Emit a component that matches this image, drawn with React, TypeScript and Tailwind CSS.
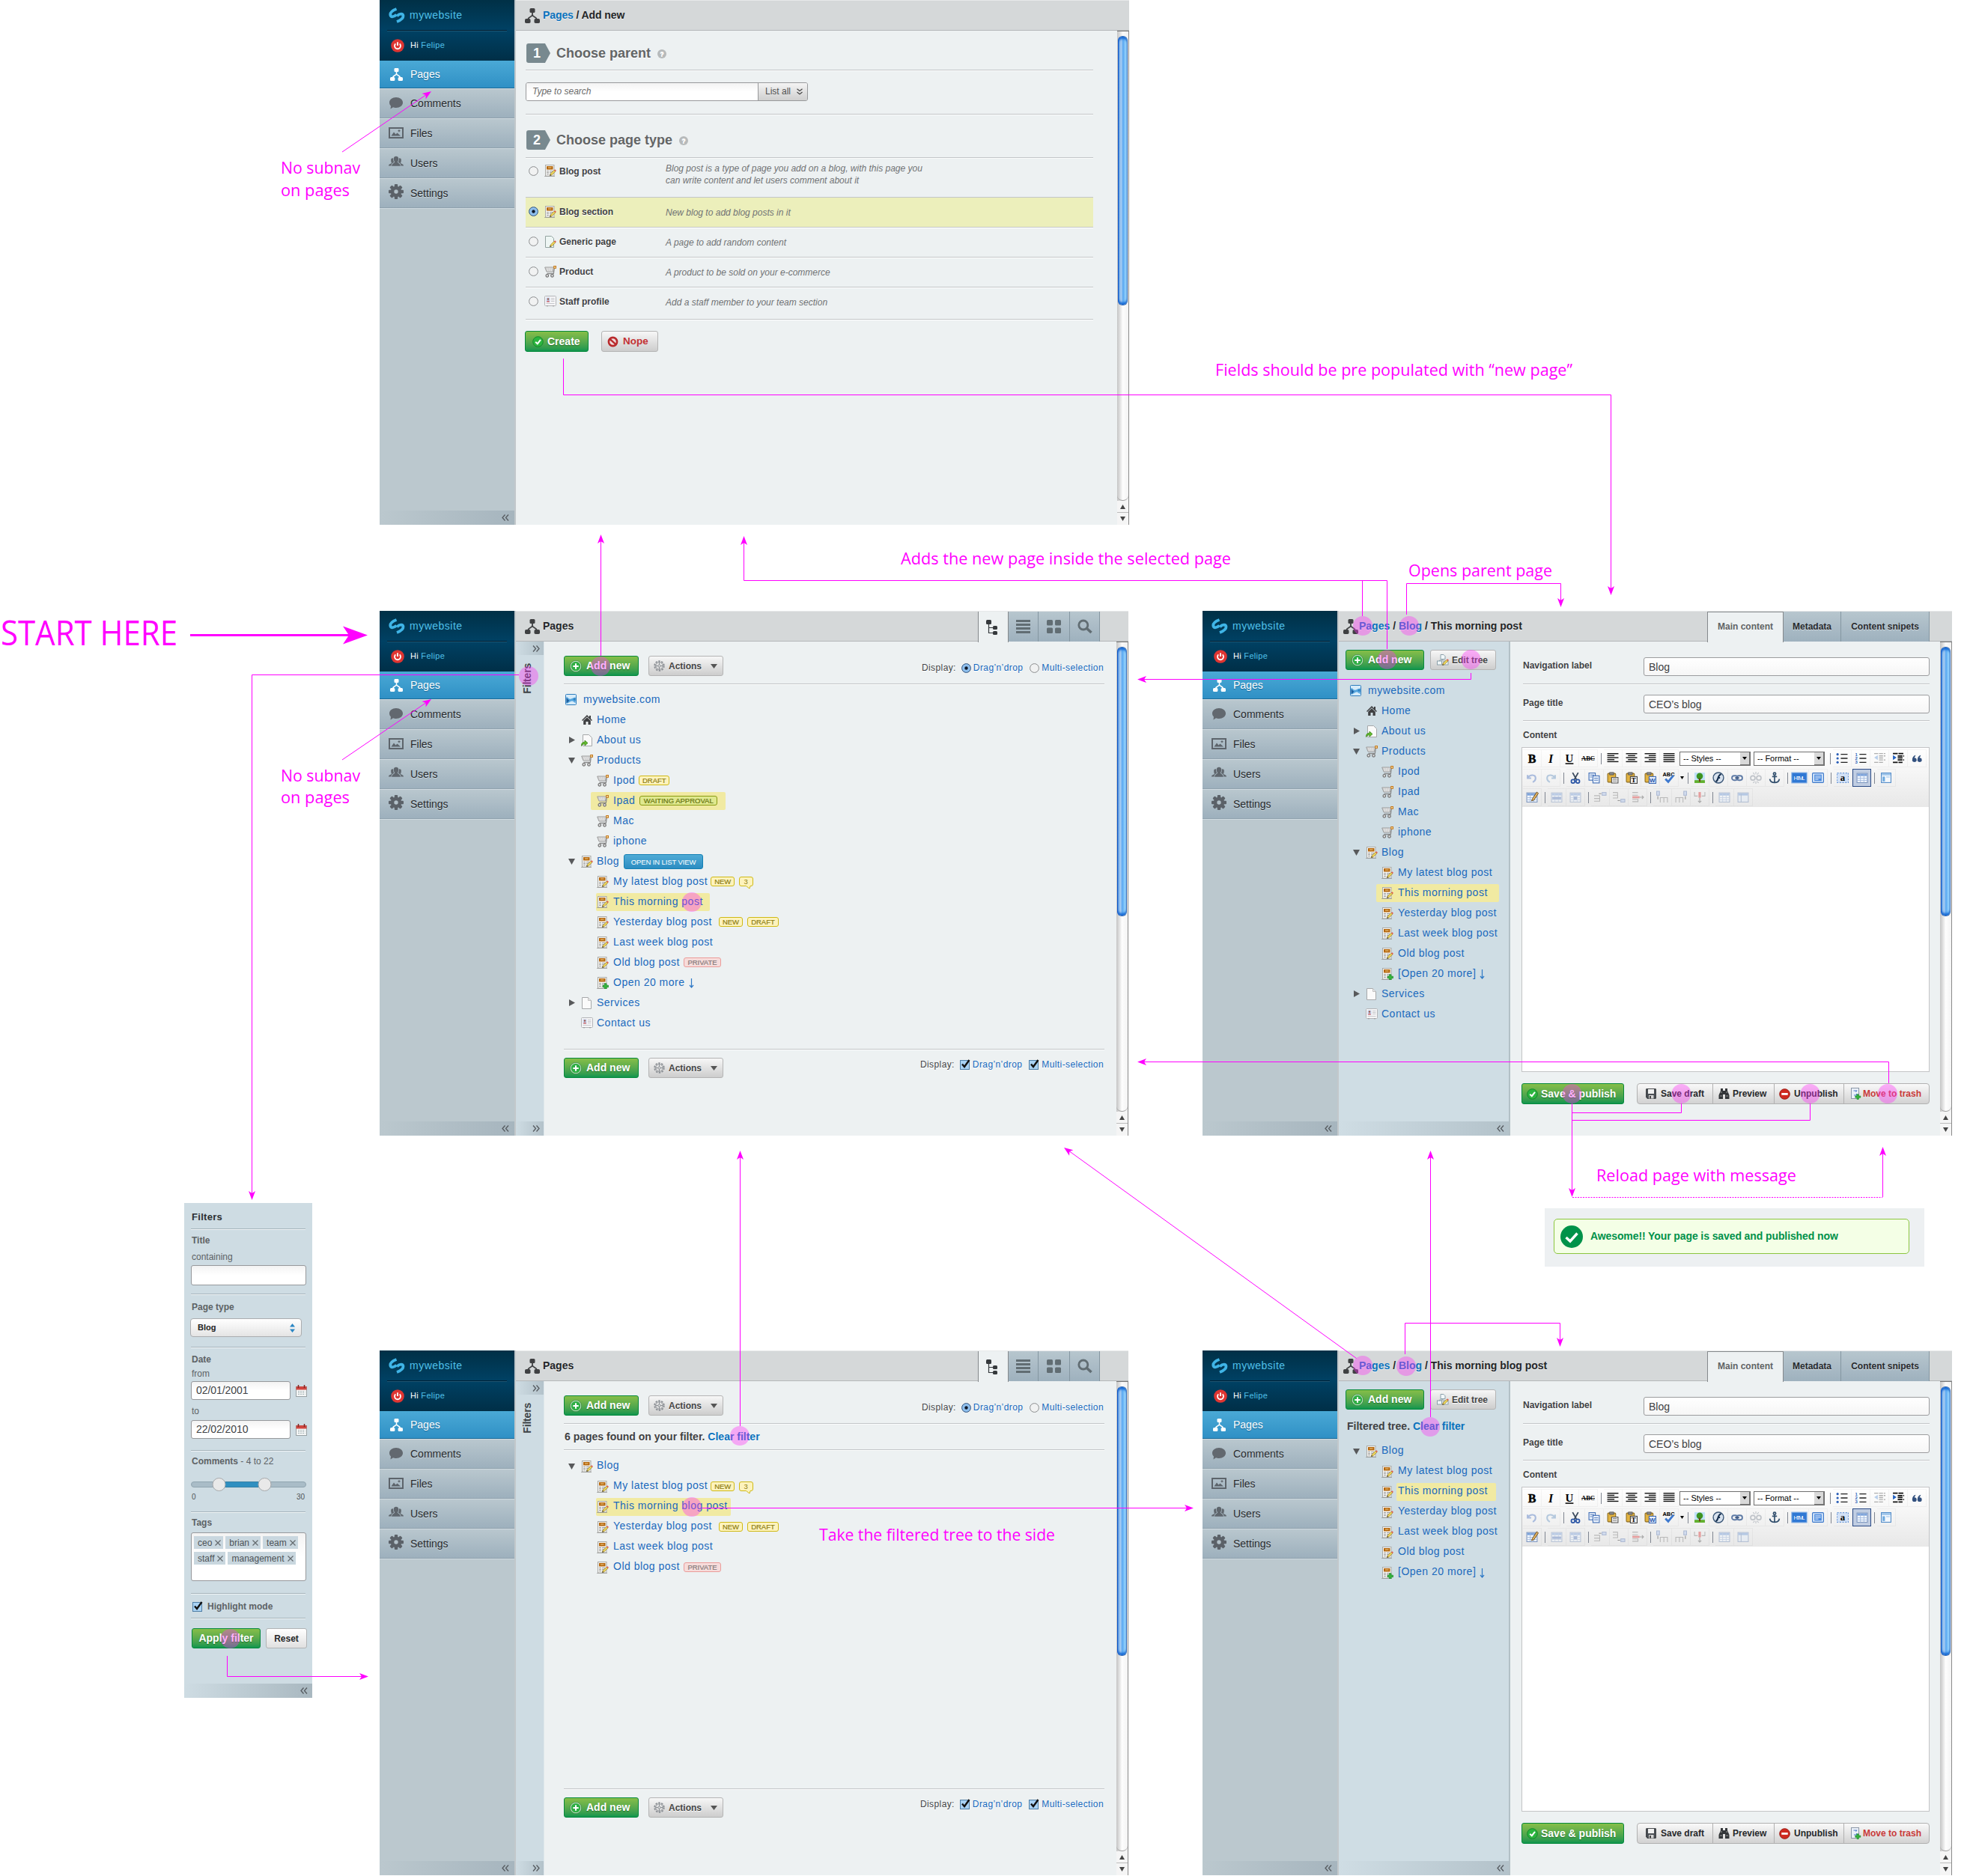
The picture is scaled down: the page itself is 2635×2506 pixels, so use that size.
import React from 'react';

type Kids = { children?: React.ReactNode; className?: string };

const green =
  'border border-[#078a3c] bg-gradient-to-b from-[#86be48] to-[#0a964e] rounded-[3px] text-white font-bold text-[14px] [text-shadow:0_1px_1px_rgba(0,60,0,.5)] shrink-0 flex items-center whitespace-nowrap';
const gray =
  'border border-[#b4b4b4] bg-gradient-to-b from-[#f7f7f7] to-[#cdcdcd] rounded-[3px] text-[#444] font-bold text-[12px] [text-shadow:0_1px_0_#fff] shrink-0 flex items-center whitespace-nowrap';
const rule = 'h-[2px] border-t border-[#c3c6c8] bg-white/80 shrink-0';

/* ---------- small pictograms ---------- */

const Logo = () => (
  <svg width="22" height="21" viewBox="0 0 22 21" fill="none" stroke="#3fb4e6" strokeWidth="3.8">
    <path d="M10.500 2C5 4 2 6.500 2.300 9.800C2.700 13.200 6.500 13 10.500 9.800" />
    <path d="M11 19C16.500 17 19.700 14.500 19.500 11.200C19 7.600 15 8 11.200 11.200" />
  </svg>
);

const SiteMap = ({ c = '#3f4042', w = 20 }: { c?: string; w?: number }) => (
  <svg width={w} height={w} viewBox="0 0 20 20" fill={c}>
    <rect x="6.500" y="0" width="7" height="6" rx="1.500" />
    <rect x="0" y="14" width="7.500" height="6" rx="1.800" />
    <rect x="12.500" y="14" width="7.500" height="6" rx="1.800" />
    <path d="M10 5V9.500M10 9C9 12 5 11 4 15M10 9C11 12 15 11 16 15" fill="none" stroke={c} strokeWidth="1.800" />
  </svg>
);

const Power = () => (
  <svg width="18" height="18" viewBox="0 0 18 18" fill="none">
    <circle cx="9" cy="9" r="8.800" fill="#df3532" />
    <path d="M6.300 6.300A4 4 0 1 0 11.700 6.300M9 4.200V9" stroke="#fff" strokeWidth="1.800" />
  </svg>
);

const Bubble = () => (
  <svg width="18" height="16" viewBox="0 0 18 16" fill="#62686f">
    <path d="M9 0C14 0 18 3 18 7S14 14 9 14C7.500 14 6 13.700 5 13.200L1.500 15.500L2 11.500C.7 10.300 0 8.800 0 7C0 3 4 0 9 0Z" />
  </svg>
);
const Picture = () => (
  <svg width="20" height="15" viewBox="0 0 20 15">
    <rect x="1" y="1" width="18" height="13" fill="none" stroke="#5d646b" strokeWidth="2" />
    <path d="M3.500 11.500L7 6.500L9.500 9.500L11.500 7.500L16 11.500Z" fill="#5d646b" />
    <path d="M14 3.200V6.200M12.500 4.700H15.500" stroke="#5d646b" strokeWidth="1.200" />
  </svg>
);
const People = () => (
  <svg width="22" height="15" viewBox="0 0 22 15" fill="#5f666d">
    <path d="M7.500 3.500C7.500 1 9 0 11 0S14.500 1 14.500 3.500C14.500 6 14 7.500 13 8.500C14 10.500 17 10.500 17.500 14.500H4.500C5 10.500 8 10.500 9 8.500C8 7.500 7.500 6 7.500 3.500Z" />
    <path d="M3.500 5.500C3.500 3.500 4.500 2.700 6.800 2.800C6.800 5.500 7 7.500 8 9C5.500 10 4 11.500 3.800 14H0C.2 11.500 3 11.500 4.500 10C3.800 8.800 3.500 7.500 3.500 5.500Z" />
    <path d="M18.500 5.500C18.500 3.500 17.500 2.700 15.200 2.800C15.200 5.500 15 7.500 14 9C16.500 10 18 11.500 18.200 14H22C21.800 11.500 19 11.500 17.500 10C18.200 8.800 18.500 7.500 18.500 5.500Z" />
  </svg>
);
const Cog = ({ c = '#5b6168', s = 20 }: { c?: string; s?: number }) => (
  <svg width={s} height={s} viewBox="0 0 20 20">
    <g fill={c}>
      {[0, 45, 90, 135].map((a) => (
        <rect key={a} x="7.800" y="0" width="4.400" height="20" rx="1" transform={`rotate(${a} 10 10)`} />
      ))}
    </g>
    <circle cx="10" cy="10" r="5" fill="none" stroke={c} strokeWidth="4.500" />
    <circle cx="10" cy="10" r="2.700" fill="#b2c0c8" />
  </svg>
);
const ActionGear = () => (
  <svg width="15" height="15" viewBox="0 0 15 15" fill="none" stroke="#8b8f94">
    <circle cx="7.500" cy="7.500" r="6.300" strokeWidth="1.800" strokeDasharray="2.500 1.450" />
    <circle cx="7.500" cy="7.500" r="4.800" />
    <circle cx="7.500" cy="7.500" r="1.600" />
    <path d="M7.500 2.500V6M7.500 9V12.500M2.500 7.500H6M9 7.500H12.500" />
  </svg>
);

const Pencil = () => (
  <g>
    <path d="M7.500 14.500L8.300 12L13 7.300L14.800 9L10 13.800Z" fill="#f1d95a" stroke="#8d742a" strokeWidth=".7" />
    <path d="M13 7.300L14.200 6.200L16 7.900L14.800 9Z" fill="#e0544a" />
    <path d="M7.300 14.800L7.900 13L9.200 14.200Z" fill="#333" />
  </g>
);
const PostBase = () => (
  <g>
    <rect x="1.500" y=".5" width="11.500" height="14.500" fill="#f7f7f5" stroke="#a9a9a5" />
    <rect x="3" y="2" width="8.500" height="4.500" fill="#b5680f" />
    <path d="M5 4H9.500" stroke="#f3cf8d" strokeWidth="1" />
    <path d="M3 8.500H6M7 8.500H11.500M3 10.500H6M7 10.500H10M3 12.500H6M7 12.500H9" stroke="#999" strokeWidth="1" />
    <path d="M0 15.500H14" stroke="#8a8a88" strokeOpacity=".6" />
  </g>
);
const Post = () => (
  <svg width="16" height="16" viewBox="0 0 16 16">
    <PostBase />
    <Pencil />
  </svg>
);
const Plus = () => (
  <path d="M10.500 8.800H13V11.200H15.500V13.700H13V16H10.500V13.700H8.200V11.200H10.500Z" fill="#35b53c" stroke="#1a8a28" strokeWidth=".7" />
);
const PostAdd = () => (
  <svg width="16" height="16" viewBox="0 0 16 16">
    <PostBase />
    <Plus />
  </svg>
);
const Cart = () => (
  <svg width="16" height="16" viewBox="0 0 16 16" fill="none">
    <path d="M.7 2H12.500L11.500 8H3Z" fill="#e4e4e4" stroke="#9a9a9a" />
    <path d="M2 4H12M2.500 6H11.500" stroke="#b4b4b4" strokeWidth=".8" strokeDasharray="1.500 1" />
    <path d="M13.500 2L12.300 10.500H3.500" stroke="#8a8a8a" strokeWidth="1.300" />
    <rect x="12.700" y=".5" width="2.800" height="2.800" fill="#f3d9a0" stroke="#c4781c" />
    <circle cx="3.800" cy="13.300" r="1.800" fill="#e0e0e0" stroke="#6f6f6f" strokeWidth="1.200" />
    <circle cx="10.500" cy="13.300" r="1.800" fill="#e0e0e0" stroke="#6f6f6f" strokeWidth="1.200" />
  </svg>
);
const Sheet = () => <path d="M1.500 .5H9.500L13.500 4.500V15.500H1.500Z" fill="#fafafa" stroke="#a6a8aa" />;
const Page = () => (
  <svg width="16" height="16" viewBox="0 0 16 16">
    <Sheet />
    <path d="M9.500 .5V4.500H13.500" fill="#e7e7e7" stroke="#b5b5b5" strokeWidth=".8" />
  </svg>
);
const PageEdit = () => (
  <svg width="16" height="16" viewBox="0 0 16 16">
    <path d="M1.500 .5H9.500L12.500 3.500V15.500H1.500Z" fill="#eef6f4" stroke="#93a3a0" />
    <Pencil />
  </svg>
);
const PageLink = () => (
  <svg width="16" height="16" viewBox="0 0 16 16">
    <path d="M2.500 .5H10.500L14.500 4.500V15.500H2.500Z" fill="#fafafa" stroke="#a6a8aa" />
    <path d="M.5 15.500C.5 11.500 2 10.300 5 10.300V8L9 11.600L5 15V12.800C3 12.800 1.500 13.500 .5 15.500Z" fill="#63bb2e" stroke="#398317" strokeWidth=".8" />
  </svg>
);
const Profile = () => (
  <svg width="16" height="15" viewBox="0 0 16 15">
    <rect x=".5" y=".5" width="15" height="13" rx="1" fill="#f6f6f7" stroke="#b3b4b8" />
    <rect x="2.500" y="2.500" width="5" height="6" fill="#c3d2ee" />
    <circle cx="5" cy="4.500" r="1.200" fill="#9c5a4a" />
    <path d="M3 8.500C3 6.300 7 6.300 7 8.500Z" fill="#cf6464" />
    <path d="M9 3.500H13.500M9 5.500H13.500M9 7.500H13.500M2.500 10.500H13.500" stroke="#c6c7cc" />
    <path d="M3 13.800H5M11 13.800H13" stroke="#999" />
  </svg>
);
const House = () => (
  <svg width="14" height="13" viewBox="0 0 14 13" fill="#3e3f41">
    <path d="M7 0L14 7L13 8L7 2.300L1 8L0 7Z" />
    <path d="M2.200 7.800L7 3.300L11.800 7.800V13H8.500V9H5.500V13H2.200Z" />
    <rect x="10" y="1" width="2" height="4" />
  </svg>
);
const World = () => (
  <svg width="15" height="15" viewBox="0 0 15 15">
    <rect x=".5" y=".5" width="14" height="14" rx="1" fill="#d6ebf9" stroke="#2f7dbd" />
    <path d="M1.500 4C3 4 4 6 5.500 6.500C8 7.500 9.500 5 13.500 4.500V12C12 12 11 9.500 9.500 9.500C7.500 9 6 11 1.500 13Z" fill="#57a6de" />
    <path d="M1.500 5C3 6 3.500 8 5.500 8.500C4.500 10 3 11.500 1.500 12Z" fill="#1c5f9f" />
    <path d="M10 7L13.500 5V9.500Z" fill="#2b7fc2" />
  </svg>
);
const AddIcon = () => (
  <svg width="16" height="16" viewBox="0 0 16 16" fill="none">
    <circle cx="8" cy="8" r="6.900" fill="#2fae45" stroke="#cfe8cf" strokeWidth="1.200" />
    <circle cx="8" cy="8" r="7.600" stroke="#2a7a3a" strokeWidth=".6" />
    <path d="M8 4.300V11.700M4.300 8H11.700" stroke="#fff" strokeWidth="2" />
  </svg>
);
const CheckIcon = () => (
  <svg width="15" height="15" viewBox="0 0 15 15" fill="none">
    <circle cx="7.500" cy="7.500" r="6.800" fill="#2bb53f" stroke="#138a2b" />
    <path d="M4.200 7.800L6.800 10.200L11 4.800" stroke="#fff" strokeWidth="2" />
  </svg>
);
const Nope = () => (
  <svg width="15" height="15" viewBox="0 0 15 15" fill="none">
    <circle cx="7.500" cy="7.500" r="5.600" fill="#eedada" stroke="#b92a2c" strokeWidth="2.600" />
    <path d="M3.500 3.800L11.500 11.200" stroke="#b92a2c" strokeWidth="2.400" />
  </svg>
);
const Help = () => (
  <div className="w-[12px] h-[12px] rounded-full bg-[#b7babb] text-white text-[9px] font-bold leading-[12px] text-center">?</div>
);
const Radio = ({ on }: { on?: boolean }) => (
  <svg width="13" height="13" viewBox="0 0 13 13">
    <circle cx="6.500" cy="6.500" r="5.900" fill={on ? '#8fc0ee' : '#f1f2f2'} stroke={on ? '#31527c' : '#8a8c8e'} />
    {on && <circle cx="6.500" cy="6.500" r="2.200" fill="#10192a" />}
  </svg>
);
const Check = () => (
  <svg width="14" height="14" viewBox="0 0 14 14" fill="none">
    <rect x=".5" y="1.500" width="12" height="12" fill="#a9d2f3" stroke="#4f7ea6" />
    <path d="M3 6.500L6 10L12.500 1" stroke="#111" strokeWidth="2.400" />
  </svg>
);
const Tri = ({ open, s = 9 }: { open?: boolean; s?: number }) => (
  <svg width={s} height={s} viewBox="0 0 9 9" fill="#58595b">
    {open ? <path d="M0 1H9L4.500 9Z" /> : <path d="M1 0L9 4.500L1 9Z" />}
  </svg>
);
const Chev = ({ right }: { right?: boolean }) => (
  <svg width="10" height="9" viewBox="0 0 10 9" fill="none" stroke="#565b60" strokeWidth="1.300">
    {right ? <path d="M1 .5L4.500 4.500L1 8.500M5.500 .5L9 4.500L5.500 8.500" /> : <path d="M4.500 .5L1 4.500L4.500 8.500M9 .5L5.500 4.500L9 8.500" />}
  </svg>
);

/* ---------- window chrome ---------- */

const navItems = [
  { label: 'Comments', icon: <Bubble />, pad: '' },
  { label: 'Files', icon: <Picture />, pad: 'pb-[2px]' },
  { label: 'Users', icon: <People />, pad: 'pb-[5px]' },
  { label: 'Settings', icon: <Cog />, pad: 'pb-[5px]' },
];

const Sidebar = () => (
  <div className="w-[180px] shrink-0 flex flex-col bg-[#bbc8ce]">
    <div className="h-[81px] shrink-0 flex flex-col bg-gradient-to-b from-[#003046] via-[#004164] to-[#002f47]">
      <div className="h-[40px] flex items-center pl-[12px] gap-[6px] text-[14px] tracking-[0.5px] text-[#4fc0ea]">
        <Logo />
        mywebsite
      </div>
      <div className="mx-[10px] h-[2px] bg-[#001f33] border-b border-[#1d5775]" />
      <div className="h-[37px] flex items-center pl-[15px] gap-[8px] text-[11px] tracking-[0.3px] text-white">
        <Power />
        <span>
          Hi <span className="text-[#4fc0ea]">Felipe</span>
        </span>
      </div>
    </div>
    <div className="h-[37px] shrink-0 flex items-center pl-[12px] gap-[9px] text-[14px] text-white bg-gradient-to-b from-[#4aa9d6] to-[#2f90c5] border-b border-[#1b6c9a] [text-shadow:0_1px_1px_rgba(0,60,100,.5)]">
      <span className="w-[20px] flex justify-center">
        <SiteMap c="#fff" w={17} />
      </span>
      Pages
    </div>
    {navItems.map((n) => (
      <div
        key={n.label}
        className="h-[40px] shrink-0 flex items-center pl-[12px] gap-[9px] text-[14px] text-[#26292c] bg-gradient-to-b from-[#b9c7ce] to-[#9db0bd] border-t border-t-[#cfdae0] border-b border-b-[#8fa1ad] [text-shadow:0_1px_0_rgba(255,255,255,.4)]"
      >
        <span className={`w-[20px] flex justify-center ${n.pad}`}>{n.icon}</span>
        {n.label}
      </div>
    ))}
    <div className="flex-1 border-t border-[#cfdae0]" />
    <div className="h-[19px] flex items-center justify-end pr-[7px] bg-gradient-to-r from-[#bbc8ce] to-[#a6b5be]">
      <Chev />
    </div>
  </div>
);

const Scrollbar = () => (
  <div className="w-[16px] shrink-0 flex flex-col border-t border-[#777] border-r border-r-[#8b8b8b] bg-gradient-to-r from-[#c4c4c4] via-[#fafafa] to-[#f0f0f0]">
    <div className="mt-[6px] ml-px w-[13px] h-[360px] rounded-[6px] border border-[#3a6fb8] border-l-[#0c55c8] bg-[linear-gradient(90deg,#6ba6e6_0%,#a9cdf2_30%,#58a8f2_55%,#8cccfa_80%,#a9e2ff_100%)] shadow-[inset_0_4px_3px_-1px_#1669d4,inset_0_-4px_3px_-1px_#1669d4]" />
    <div className="flex-1 rounded-b-[7px] border-b border-[#a0a0a0] bg-gradient-to-r from-[#c4c4c4] via-[#fdfdfd] to-[#f3f3f3]" />
    <div className="h-[16px] flex items-center justify-center bg-[#f5f5f5] border-b border-[#bbb]">
      <svg width="7" height="6">
        <path d="M0 6L3.500 0L7 6Z" fill="#444" />
      </svg>
    </div>
    <div className="h-[16px] flex items-center justify-center bg-[#f5f5f5]">
      <svg width="7" height="6">
        <path d="M0 0L3.500 6L7 0Z" fill="#444" />
      </svg>
    </div>
  </div>
);

const Win = ({
  pos,
  title,
  tabs,
  children,
  head = 'pl-[12px] gap-[4px]',
}: {
  pos: string;
  title: React.ReactNode;
  tabs?: React.ReactNode;
  children: React.ReactNode;
  head?: string;
}) => (
  <section className={`absolute w-[1000px] h-[701px] flex bg-[#edf1f2] ${pos}`}>
    <Sidebar />
    <div className="flex-1 flex flex-col border-l-2 border-[#c2c8cb]">
      <div className="h-[41px] shrink-0 flex border-t border-t-[#e6e8e9] bg-[#d5d8d9] shadow-[inset_0_-1px_0_#b5b8ba]">
        <div className={`flex items-center h-[39px] font-bold text-[14px] text-[#232527] whitespace-nowrap [text-shadow:0_1px_0_rgba(255,255,255,.6)] ${head}`}>
          <SiteMap />
          <span>{title}</span>
        </div>
        <div className="flex-1" />
        {tabs}
      </div>
      <div className="flex-1 flex min-h-0">
        {children}
        <Scrollbar />
      </div>
    </div>
  </section>
);

const L = ({ children }: Kids) => <span className="text-[#0a72bd]">{children}</span>;

/* ---------- "Add new" window ---------- */

const Step = ({ n, children }: { n: string; children: React.ReactNode }) => (
  <div className="flex items-center h-[26px] ml-px text-[18px] font-bold text-[#636566] [text-shadow:0_1px_0_#fff]">
    <div className="w-[32px] h-[26px] mr-[8px] pl-[9px] bg-[#78898f] text-white leading-[26px] rounded-l-[3px] [clip-path:polygon(0_0,78%_0,100%_50%,78%_100%,0_100%)] [text-shadow:none]">
      {n}
    </div>
    {children}
    <div className="ml-[9px] mt-[2px]">
      <Help />
    </div>
  </div>
);

const types = [
  { n: 'Blog post', d: 'Blog post is a type of page you add on a blog, with this page you can write content and let users comment about it', i: <Post />, h: 'h-[53px] items-start pt-[9px]', on: false },
  { n: 'Blog section', d: 'New blog to add blog posts in it', i: <Post />, h: 'h-[40px] items-center bg-[#ecefbb] pb-[2px]', on: true },
  { n: 'Generic page', d: 'A page to add random content', i: <PageEdit />, h: 'h-[40px] items-center pb-[2px]', on: false },
  { n: 'Product', d: 'A product to be sold on your e-commerce', i: <Cart />, h: 'h-[40px] items-center pb-[2px]', on: false },
  { n: 'Staff profile', d: 'Add a staff member to your team section', i: <Profile />, h: 'h-[43px] items-center pb-[5px]', on: false },
];

const AddWindow = () => (
  <Win pos="left-[507px] top-0" title={<span className="tracking-[-0.1px]"><L>Pages</L> / Add new</span>}>
    <div className="flex-1 flex flex-col pl-[13px] pr-[32px]">
      <div className="h-[17px]" />
      <Step n="1">Choose parent</Step>
      <div className={`mt-[9px] ${rule}`} />
      <div className="mt-[15px] w-[377px] h-[25px] shrink-0 flex rounded-[3px] border border-[#98999b] overflow-hidden text-[12px] leading-[23px]">
        <div className="flex-1 bg-gradient-to-b from-[#f3f3f3] via-white to-white italic text-[#6b6b6b] pl-[8px]">Type to search</div>
        <div className="w-[66px] flex items-center gap-[8px] pl-[9px] border-l border-[#98999b] bg-gradient-to-b from-[#f4f4f4] to-[#cfcfcf] text-[#505050]">
          List all
          <svg width="8" height="9" viewBox="0 0 8 9" fill="none" stroke="#444" strokeWidth="1.200">
            <path d="M.5 .8L4 3.500L7.500 .8M.5 5L4 7.800L7.500 5" />
          </svg>
        </div>
      </div>
      <div className={`mt-[17px] ${rule}`} />
      <div className="h-[20px]" />
      <Step n="2">Choose page type</Step>
      <div className={`mt-[10px] ${rule}`} />
      <div className="flex flex-col mt-[-1px] w-[758px]">
        {types.map((t) => (
          <div key={t.n} className={`shrink-0 flex border-b border-[#c3c6c8] shadow-[0_1px_0_#fff] pl-[4px] text-[12px] ${t.h}`}>
            <div className="w-[21px] h-[16px] flex items-center shrink-0">
              <Radio on={t.on} />
            </div>
            <div className="w-[20px] shrink-0">{t.i}</div>
            <div className="w-[142px] shrink-0 font-bold text-[#3f4143] leading-[17px] pt-[1px] [text-shadow:0_1px_0_#fff]">{t.n}</div>
            <div className={`italic text-[#717375] leading-[16px] w-[352px] ${t.n === 'Blog post' ? 'mt-[-3px]' : 'mt-[2px]'}`}>{t.d}</div>
          </div>
        ))}
      </div>
      <div className="flex gap-[17px] mt-[15px] ml-[-1px]">
        <div className={`w-[85px] h-[28px] pl-[9px] gap-[5px] ${green}`}>
          <CheckIcon />
          Create
        </div>
        <div className="w-[76px] h-[28px] pl-[7px] gap-[6px] border border-[#b4b4b4] bg-gradient-to-b from-[#f7f7f7] to-[#cdcdcd] rounded-[3px] text-[#c33132] font-bold text-[13.500px] flex items-center">
          <Nope />
          Nope
        </div>
      </div>
    </div>
  </Win>
);

/* ---------- tree ---------- */

const tag = {
  y: 'bg-[#fdf3bd] border-[#cfb916] text-[#8d7d12]',
  g: 'bg-[#dfe88e] border-[#8a9a12] text-[#66730c]',
  r: 'bg-[#f6dcdb] border-[#eb9c9a] text-[#857a7a]',
};
const Tag = ({ k, w, children, className = '' }: Kids & { k: keyof typeof tag; w: string }) => (
  <span className={`h-[13px] text-center tracking-normal border rounded-[3px] text-[9.500px] leading-[11px] shrink-0 [-webkit-text-stroke:0.2px] ${w} ${tag[k]} ${className}`}>{children}</span>
);
const Three = () => (
  <span className="ml-[6px] w-[19px] h-[17px] mt-[4px] flex">
    <svg width="19" height="17" viewBox="0 0 19 17">
      <path d="M3 .5H16Q18.500 .5 18.500 3V10Q18.500 12.500 16 12.500H15L14 16L9.500 12.500H3Q.5 12.500 .5 10V3Q.5 .5 3 .5Z" fill="#fdf3bd" stroke="#cfb916" />
      <text x="9.500" y="10" fontSize="9.500" textAnchor="middle" fill="#8d7d12">3</text>
    </svg>
  </span>
);

type Row = {
  d: 0 | 1 | 2;
  t: string;
  i: React.ReactNode;
  a?: 'open' | 'shut';
  x?: React.ReactNode;
  hl?: string;
  lhl?: string;
};

const Tree = ({ rows, low }: { rows: Row[]; low?: boolean }) => (
  <div className="flex flex-col">
    {rows.map((r) => (
      <div key={r.t} className="h-[27px] flex items-center whitespace-nowrap text-[14px] tracking-[0.5px] text-[#1a69bd]">
        {r.d === 1 && <span className="w-[21px] pl-[4px] shrink-0">{r.a && <Tri open={r.a === 'open'} />}</span>}
        {r.d === 2 && <span className="w-[42px] shrink-0" />}
        <div className={`h-[24px] flex items-center rounded-[2px] ${r.hl ? 'bg-[#f1eaa2] ' + r.hl : ''}`}>
          <span className={`shrink-0 ${r.d === 0 ? 'w-[24px]' : r.d === 1 ? 'w-[21px]' : 'w-[22px]'}`}>{r.i}</span>
          <span className={`${low ? 'pb-[3px]' : ''} ${r.lhl ? 'bg-[#f1eaa2] rounded-[2px] h-[24px] leading-[21px] ' + r.lhl : ''}`}>{r.t}</span>
          {r.x}
        </div>
      </div>
    ))}
  </div>
);

const Down = () => (
  <svg className="ml-[5px] mt-[2px]" width="7" height="13" viewBox="0 0 7 13" fill="none" stroke="#2f79c6" strokeWidth="1.200">
    <path d="M3.500 0V12M1 9L3.500 12L6 9" />
  </svg>
);

const blogTags: Record<string, React.ReactNode> = {
  'My latest blog post': (
    <>
      <Tag k="y" w="w-[32px]" className="ml-[4px]">NEW</Tag>
      <Three />
    </>
  ),
  'Yesterday blog post': (
    <>
      <Tag k="y" w="w-[32px]" className="ml-[9px]">NEW</Tag>
      <Tag k="y" w="w-[42px]" className="ml-[6px]">DRAFT</Tag>
    </>
  ),
  'Old blog post': <Tag k="r" w="w-[50px]" className="ml-[5px]">PRIVATE</Tag>,
};

const top = (full: boolean): Row[] => [
  { d: 0, t: 'mywebsite.com', i: <World /> },
  { d: 1, t: 'Home', i: <span className="flex pl-[1px]"><House /></span> },
  { d: 1, t: 'About us', i: <PageLink />, a: 'shut' },
  { d: 1, t: 'Products', i: <Cart />, a: 'open' },
  { d: 2, t: 'Ipod', i: <Cart />, x: full && <Tag k="y" w="w-[41px]" className="ml-[5px]">DRAFT</Tag> },
  { d: 2, t: 'Ipad', i: <Cart />, x: full && <Tag k="g" w="w-[104px]" className="ml-[6px]">WAITING APPROVAL</Tag>, hl: full ? 'ml-[-8px] pl-[8px] pr-[11px]' : undefined },
  { d: 2, t: 'Mac', i: <Cart /> },
  { d: 2, t: 'iphone', i: <Cart /> },
];
const posts = (tags: boolean, third: string, hl?: string, lhl?: string): Row[] =>
  ['My latest blog post', third, 'Yesterday blog post', 'Last week blog post', 'Old blog post'].map((t) => ({
    d: 2 as const,
    t,
    i: <Post />,
    x: tags ? blogTags[t] : undefined,
    hl: t === third ? hl : undefined,
    lhl: t === third ? lhl : undefined,
  }));
const tail: Row[] = [
  { d: 1, t: 'Services', i: <Page />, a: 'shut' },
  { d: 1, t: 'Contact us', i: <Profile /> },
];
const blogRow: Row = { d: 1, t: 'Blog', i: <Post />, a: 'open' };

const ListBtn = () => (
  <span className="ml-[6px] w-[106px] h-[20px] border border-[#1380b4] rounded-[3px] bg-gradient-to-b from-[#4fabd6] to-[#2b8dc2] text-white text-[9.500px] leading-[19px] text-center tracking-[-0.1px]">
    OPEN IN LIST VIEW
  </span>
);

const fullTree: Row[] = [
  ...top(true),
  { ...blogRow, x: <ListBtn /> },
  ...posts(true, 'This morning post', 'ml-[-1px] pl-px pr-[9px]'),
  { d: 2, t: 'Open 20 more', i: <PostAdd />, x: <Down /> },
  ...tail,
];
const sideTree: Row[] = [
  ...top(false),
  blogRow,
  ...posts(false, 'This morning post', 'ml-[-7px] pl-[7px] pr-[15px]'),
  { d: 2, t: '[Open 20 more]', i: <PostAdd />, x: <Down /> },
  ...tail,
];
const filteredTree: Row[] = [blogRow, ...posts(true, 'This morning blog post', 'ml-[-1px] pl-px pr-[4px]')];
const filteredSide: Row[] = [
  blogRow,
  ...posts(false, 'This morning post', undefined, 'ml-[-2px] pl-[2px] pr-[11px]'),
  { d: 2, t: '[Open 20 more]', i: <PostAdd />, x: <Down /> },
];

/* ---------- tree windows ---------- */

const viewTab = 'h-[40px] flex items-center justify-center bg-gradient-to-b from-[#b7c6ce] to-[#9eb1be] border-r border-[#8496a1]';
const ViewTabs = () => (
  <>
    <div className="w-[41px] h-[41px] flex items-center justify-center pr-[4px] bg-[#edf1f2] border-x border-[#85898c]">
      <svg width="15" height="20" viewBox="0 0 15 20" fill="#35393c">
        <rect width="7" height="6" rx="1.500" />
        <rect x="9" y="8" width="6" height="5" rx="1.500" />
        <rect x="9" y="15" width="6" height="5" rx="1.500" />
        <path d="M3.500 5V17.500H10M3.500 10.500H10" fill="none" stroke="#35393c" strokeWidth="1.200" />
      </svg>
    </div>
    <div className={`w-[40px] ${viewTab}`}>
      <svg width="19" height="18" viewBox="0 0 19 18" fill="#616d73">
        <rect width="19" height="3" />
        <rect y="5" width="19" height="3" />
        <rect y="10" width="19" height="3" />
        <rect y="15" width="19" height="3" />
      </svg>
    </div>
    <div className={`w-[42px] ${viewTab}`}>
      <svg width="19" height="18" viewBox="0 0 19 18" fill="#616d73">
        <rect width="8" height="7.500" rx="1.500" />
        <rect x="11" width="8" height="7.500" rx="1.500" />
        <rect y="10.500" width="8" height="7.500" rx="1.500" />
        <rect x="11" y="10.500" width="8" height="7.500" rx="1.500" />
      </svg>
    </div>
    <div className={`w-[40px] ${viewTab}`}>
      <svg width="20" height="20" viewBox="0 0 20 20" fill="none" stroke="#616d73">
        <circle cx="7.800" cy="8" r="6" strokeWidth="2.800" />
        <path d="M12.500 12.500L18.500 18" strokeWidth="3.600" />
      </svg>
    </div>
    <div className="w-[38px]" />
  </>
);

const AddNew = ({ w = 'w-[100px]' }: { w?: string }) => (
  <div className={`h-[27px] pl-[7px] gap-[6px] ${w} ${green}`}>
    <AddIcon />
    Add new
  </div>
);
const Actions = () => (
  <div className={`w-[100px] h-[27px] pl-[6px] ${gray}`}>
    <ActionGear />
    <span className="ml-[5px] mr-[12px]">Actions</span>
    <svg width="9" height="6">
      <path d="M0 0H9L4.500 6Z" fill="#555" />
    </svg>
  </div>
);
const Display = ({ box }: { box?: boolean }) => (
  <div className="flex items-center text-[12px] tracking-[0.4px] whitespace-nowrap text-[#434547] [text-shadow:0_1px_0_#fff]">
    <span className="mr-[7px]">Display:</span>
    {box ? <Check /> : <Radio on />}
    <span className="text-[#1568bd] ml-[3px] mr-[9px]">Drag’n’drop</span>
    {box ? <Check /> : <Radio />}
    <span className="text-[#1568bd] ml-[3px]">Multi-selection</span>
  </div>
);

const TreeWindow = ({ pos, filtered }: { pos: string; filtered?: boolean }) => (
  <Win pos={pos} title="Pages" tabs={<ViewTabs />}>
    <div className="w-[38px] shrink-0 flex flex-col items-center bg-[#cedce3] border-r border-[#dfe8ec]">
      <div className="w-full h-[18px] flex items-center justify-end pr-[5px] bg-gradient-to-r from-[#cedce3] to-[#b3c2ca]">
        <Chev right />
      </div>
      <div className="[writing-mode:vertical-rl] rotate-180 mt-[11px] mr-[7px] text-[14px] font-bold tracking-[-0.2px] leading-[18px] text-[#3d4346]">Filters</div>
      <div className="flex-1" />
      <div className="w-full h-[19px] flex items-center justify-end pr-[5px] bg-gradient-to-r from-[#cedce3] to-[#b3c2ca]">
        <Chev right />
      </div>
    </div>
    <div className="flex-1 flex flex-col pl-[26px] pr-[16px]">
      <div className="h-[19px]" />
      <div className="flex gap-[13px]">
        <AddNew />
        <Actions />
        <div className="flex-1" />
        <div className="pt-[7px] pr-[1px]">
          <Display />
        </div>
      </div>
      <div className={`mt-[10px] ${rule}`} />
      {filtered && (
        <>
          <div className="h-[33px] leading-[33px] text-[14px] font-bold text-[#3f4143] pl-[1px] whitespace-nowrap [text-shadow:0_1px_0_#fff]">
            6 pages found on your filter. <L>Clear filter</L>
          </div>
          <div className={rule} />
          <div className="h-[7px]" />
        </>
      )}
      {!filtered && <div className="h-[6px]" />}
      <div className="pl-[2px]">
        <Tree rows={filtered ? filteredTree : fullTree} low={filtered} />
      </div>
      <div className="flex-1" />
      <div className={rule} />
      <div className="flex gap-[13px] mt-[10px] mb-[77px]">
        <AddNew />
        <Actions />
        <div className="flex-1" />
        <div className="pr-[1px]">
          <Display box />
        </div>
      </div>
    </div>
  </Win>
);

/* ---------- rich text toolbar ---------- */

const stripes = (w: number[], x: (n: number) => number) => w.map((n, i) => <rect key={i} x={x(n)} y={1 + i * 2.5} width={n} height="1.300" fill="#111" />);
const clip = (
  <g>
    <rect x="1" y="2" width="10" height="11" rx="1" fill="#e3b341" stroke="#8c6a1c" />
    <rect x="3.500" y=".8" width="5" height="3" fill="#888" stroke="#444" strokeWidth=".6" />
  </g>
);
const grid = (
  <g>
    <rect x="1" y="2" width="13" height="11.500" fill="#f3f8fe" stroke="#7d95bd" />
    <rect x="1.500" y="2.500" width="12" height="2.800" fill="#7da4dc" />
    <path d="M1 8H14M1 10.700H14M5.300 3V13.500M9.700 3V13.500" stroke="#9fb6dc" strokeWidth=".8" />
  </g>
);
const glyphs: Record<string, React.ReactNode> = {
  B: <text x="7.500" y="13" textAnchor="middle" fontFamily="Liberation Serif" fontWeight="bold" fontSize="15" stroke="#000" strokeWidth=".4">B</text>,
  I: <text x="7.500" y="13" textAnchor="middle" fontFamily="Liberation Serif" fontWeight="bold" fontStyle="italic" fontSize="15">I</text>,
  U: <text x="7.500" y="12.500" textAnchor="middle" fontFamily="Liberation Serif" fontWeight="bold" fontSize="14" textDecoration="underline">U</text>,
  S: <text x="7.500" y="10.500" textAnchor="middle" fontFamily="Liberation Serif" fontWeight="bold" fontSize="8" textDecoration="line-through">ABC</text>,
  al: stripes([14, 9, 14, 9, 14], () => 0.5),
  ac: stripes([14, 9, 14, 9, 14], (n) => 7.5 - n / 2),
  ar: stripes([14, 9, 14, 9, 14], (n) => 14.5 - n),
  aj: stripes([14, 14, 14, 14, 14], () => 0.5),
  ul: (
    <g>
      <path d="M6 2.500H14.500M6 7.500H14.500M6 12.500H14.500" stroke="#222" strokeWidth="1.200" />
      <g fill="#2b5fb8"><circle cx="2" cy="2.500" r="1.500" /><circle cx="2" cy="7.500" r="1.500" /><circle cx="2" cy="12.500" r="1.500" /></g>
    </g>
  ),
  ol: (
    <g>
      <path d="M6 2.500H14.500M6 7.500H14.500M6 12.500H14.500" stroke="#222" strokeWidth="1.200" />
      <g fill="#2b5fb8" fontSize="5.500" fontWeight="bold"><text x=".5" y="4.500">1</text><text x=".5" y="9.500">2</text><text x=".5" y="14.500">3</text></g>
    </g>
  ),
  out: (
    <g opacity=".35">
      <path d="M1 1.500H15M7 4.500H15M7 7H13M7 9.500H15M1 12.500H13" stroke="#222" strokeWidth="1.300" strokeDasharray="5 1" />
      <path d="M5.500 3.500V9.500L1 6.500Z" fill="#3f7fd0" />
    </g>
  ),
  in: (
    <g>
      <path d="M1 1.500H15M7 4.500H15M7 7H13M7 9.500H15M1 12.500H13" stroke="#111" strokeWidth="1.600" strokeDasharray="6 1" />
      <path d="M1 3.500V9.500L5.500 6.500Z" fill="#2463c4" />
    </g>
  ),
  q: (
    <g fill="#33517f">
      <circle cx="4.500" cy="9.500" r="2.700" /><circle cx="11" cy="9.500" r="2.700" />
      <path d="M1.800 9.500Q1.800 4.500 6 3.500L5.500 5Q4 6.500 4.500 8ZM8.300 9.500Q8.300 4.500 12.500 3.500L12 5Q10.500 6.500 11 8Z" />
    </g>
  ),
  undo: <path d="M2 4V8H6.500M2.500 7.500C5 3 12 3 12 8C12 10.500 10.500 12 8.500 13" fill="none" stroke="#a9bbdd" strokeWidth="2" />,
  redo: <path d="M13 4V8H8.500M12.500 7.500C10 3 3 3 3 8C3 10.500 4.500 12 6.500 13" fill="none" stroke="#b4c8dd" strokeWidth="2" />,
  cut: (
    <g fill="none">
      <path d="M4 1L9 10M11 1L6 10" stroke="#3b4a5e" strokeWidth="1.700" />
      <circle cx="4.500" cy="12" r="2.200" stroke="#2a55a5" strokeWidth="1.600" /><circle cx="10.500" cy="12" r="2.200" stroke="#2a55a5" strokeWidth="1.600" />
    </g>
  ),
  copy: (
    <g stroke="#3f6cb4" fill="#e8f0fb">
      <rect x="1" y="1.500" width="8" height="9" /><rect x="6" y="5" width="8" height="9" />
      <path d="M2.500 4H7.500M2.500 6.500H5M7.500 8H12.500M7.500 10.500H12.500" strokeWidth=".8" />
    </g>
  ),
  paste: <g>{clip}<path d="M6 7H14V14H6Z" fill="#eee" stroke="#555" /><path d="M7.500 9H12.500M7.500 11.500H12.500" stroke="#888" /></g>,
  pt: <g>{clip}<rect x="6" y="6" width="8.500" height="8.500" fill="#eee" stroke="#444" /><text x="10.200" y="13.500" textAnchor="middle" fontFamily="Liberation Serif" fontWeight="bold" fontSize="8.500">T</text></g>,
  pw: <g>{clip}<rect x="6" y="6" width="8.500" height="8.500" fill="#e7effb" stroke="#3a67b5" /><text x="10.200" y="13" textAnchor="middle" fontWeight="bold" fontSize="7.500" fill="#2455aa">W</text></g>,
  spell: <g><text x="7" y="6" textAnchor="middle" fontWeight="bold" fontSize="7">ABC</text><path d="M3 9L6.500 12.500L13 4.500" fill="none" stroke="#3c78cf" strokeWidth="2.600" /></g>,
  img: <g><rect x="1" y="1" width="13" height="13" fill="#bfe0f7" /><rect x="1" y="10.500" width="13" height="3.500" fill="#62b02c" /><circle cx="7.500" cy="5.500" r="4" fill="#3c9421" /><rect x="6.500" y="8" width="2" height="4.500" fill="#6e4217" /></g>,
  flash: <g><circle cx="7.500" cy="7.500" r="6.500" fill="#d8e2ee" stroke="#3c5878" strokeWidth="1.300" /><path d="M11 3C7.500 3.500 7.500 7 6.500 9.500C6 11 5.500 12 4 12M6.500 7.500H9.500" fill="none" stroke="#17304f" strokeWidth="2" /></g>,
  link: <g fill="none" stroke="#5f7ba6" strokeWidth="1.800"><rect x="1" y="5" width="7" height="5.500" rx="2.700" /><rect x="7" y="5" width="7" height="5.500" rx="2.700" /><path d="M5 7.700H10" stroke="#3d5680" /></g>,
  unlink: <g fill="none" stroke="#bfc3c9" strokeWidth="1.600"><rect x="1" y="5" width="5.500" height="5.500" rx="2.500" /><rect x="8.500" y="5" width="5.500" height="5.500" rx="2.500" /><path d="M4 1L6 3.500M11 1L9 3.500M4 14L6 12M11 14L9 12M7.500 0V3M7.500 12V15" strokeWidth="1" /></g>,
  anchor: <g fill="none" stroke="#33506e" strokeWidth="1.600"><circle cx="7.500" cy="2.500" r="1.500" /><path d="M7.500 4V13.500M4.500 6H10.500M1.500 9C2 12.500 5 13.500 7.500 13.500C10 13.500 13 12.500 13.500 9" /></g>,
  html: <g><rect x="-2" y="1" width="19" height="13" fill="#2f78d4" stroke="#8db4e6" /><text x="7.500" y="10.300" textAnchor="middle" fontSize="7" textLength="14" fill="#fff">HTML</text></g>,
  prev: <g><rect x=".5" y="1.500" width="14" height="12" rx="1" fill="#cfe2f8" stroke="#3d78c9" /><rect x="3" y="3.500" width="9" height="8" fill="#4b8ade" /><path d="M4 5.500H11M4 7.500H11M4 9.500H8" stroke="#fff" strokeWidth=".8" /></g>,
  a: <g><rect x=".5" y="1.500" width="14" height="12" fill="#d2e1f6" stroke="#6f9bd9" strokeDasharray="2 1.500" /><text x="7.500" y="11.500" textAnchor="middle" fontFamily="Liberation Serif" fontWeight="bold" fontSize="12">a</text></g>,
  tbl: grid,
  tpl: <g><rect x="1.500" y="1.500" width="12" height="12" fill="#f4f8fd" stroke="#4a86c6" /><rect x="2" y="2" width="11" height="2.500" fill="#9cc4ea" /><rect x="3" y="6" width="3" height="6" fill="#6faade" /><path d="M7.500 6.500H12" stroke="#9cc4ea" /></g>,
  tedit: <g>{grid}<path d="M7 12L8 9.500L13.500 1L15.500 2.500L10 11Z" fill="#e8b866" stroke="#5d4012" strokeWidth=".8" /></g>,
  r1: <g opacity=".45">{grid}<rect x="2" y="7" width="11" height="3" fill="#5d7fc0" /></g>,
  r2: <g opacity=".45">{grid}<rect x="5.500" y="6.500" width="4" height="4" fill="#5d7fc0" /></g>,
  i1: <g opacity=".5" fill="none" stroke="#888"><path d="M0 5.500H7M0 9H7M0 12.500H7V5.500" /><rect x="10" y="1.500" width="5" height="3.500" fill="#b9cdf0" stroke="#7089bb" /><path d="M6 3H9" stroke="#444" /></g>,
  i2: <g opacity=".5" fill="none" stroke="#888"><path d="M0 1.500H6M0 5H6M0 8.500H6V1.500" /><rect x="10" y="10" width="5" height="3.500" fill="#b9cdf0" stroke="#7089bb" /><path d="M6 11.700H9" stroke="#444" /></g>,
  i3: <g opacity=".5" fill="none" stroke="#888"><path d="M1 1.500H8M1 5H8M1 10H8V13H1" /><path d="M1 7.500H10" stroke="#e05050" strokeWidth="2.500" /><path d="M10 7.500H15M13 5.500L15 7.500L13 9.500" stroke="#666" /></g>,
  c1: <g opacity=".5" fill="none" stroke="#888"><path d="M5 14V8H14V14M9.500 8V14" /><rect x=".5" y="0" width="3.500" height="5" fill="#b9cdf0" stroke="#7089bb" /><path d="M2 6V10" stroke="#444" /></g>,
  c2: <g opacity=".5" fill="none" stroke="#888"><path d="M1 14V8H10V14M5.500 8V14" /><rect x="11" y="0" width="3.500" height="5" fill="#b9cdf0" stroke="#7089bb" /><path d="M13 6V10" stroke="#444" /></g>,
  c3: <g opacity=".5" fill="none" stroke="#888"><path d="M1 1V6H5M14 1V6H10" /><path d="M7.500 1V8" stroke="#e05050" strokeWidth="3" /><path d="M7.500 8V14M5.500 12L7.500 14L9.500 12" stroke="#666" /></g>,
  m1: <g opacity=".5">{grid}</g>,
  m2: <g opacity=".5"><rect x="1" y="2" width="13" height="11.500" fill="#e3ecf9" stroke="#7d95bd" /><rect x="1.500" y="2.500" width="12" height="2.800" fill="#7da4dc" /><path d="M5 3V13.500" stroke="#7d95bd" /></g>,
};

const Cell = ({ k }: { k: string }) => (
  <div className={`w-[25px] h-[24px] shrink-0 flex items-center justify-center ${k === 'tbl' ? 'bg-[#c0cde2] border border-[#2a4a86]' : 'border border-black/[0.035] border-l-0'}`}>
    <svg width="16" height="16" viewBox="0 0 15 15" overflow="visible">{glyphs[k]}</svg>
  </div>
);
const Strip = ({ items }: { items: string[] }) => (
  <div className="h-[26px] flex items-center pl-px">
    {items.map((k, i) =>
      k === '|' ? (
        <div key={i} className="w-[8px] shrink-0 flex justify-center"><div className="w-px h-[15px] bg-[#7f8590]" /></div>
      ) : k === 'caret' ? (
        <div key={i} className="w-[8px] shrink-0 flex justify-center"><svg width="5" height="4"><path d="M0 0H5L2.500 4Z" /></svg></div>
      ) : k === 'Styles' || k === 'Format' ? (
        <div key={i} className={`h-[19px] shrink-0 flex items-center justify-between border border-[#707070] bg-white text-[11px] text-black whitespace-nowrap ${k === 'Styles' ? 'ml-px mr-[4px] w-[95px] pl-[4px]' : 'mr-[3px] w-[95px] pl-[4px]'}`}>
          -- {k} --
          <div className="w-[13px] h-[17px] bg-[#d9d9d9] border-r border-b border-[#777] flex items-center justify-center"><svg width="6" height="4"><path d="M0 0H6L3 4Z" /></svg></div>
        </div>
      ) : (
        <Cell key={i} k={k} />
      ),
    )}
  </div>
);

const Editor = () => (
  <div className="w-[545px] ml-[-2px] h-[434px] flex flex-col border border-[#c3c4c6] bg-white">
    <div className="h-[79px] shrink-0 flex flex-col pt-[1px] bg-gradient-to-b from-white to-[#e8e8e8]">
      <Strip items={['B', 'I', 'U', 'S', '|', 'al', 'ac', 'ar', 'aj', 'Styles', 'Format', '|', 'ul', 'ol', 'out', 'in', 'q']} />
      <Strip items={['undo', 'redo', '|', 'cut', 'copy', 'paste', 'pt', 'pw', 'spell', 'caret', '|', 'img', 'flash', 'link', 'unlink', 'anchor', '|', 'html', 'prev', '|', 'a', 'tbl', '|', 'tpl']} />
      <Strip items={['tedit', '|', 'r1', 'r2', '|', 'i1', 'i2', 'i3', '|', 'c1', 'c2', 'c3', '|', 'm1', 'm2']} />
    </div>
  </div>
);

/* ---------- edit windows ---------- */

const EditTabs = () => (
  <div className="flex text-[12px] font-bold whitespace-nowrap text-[#26292c] [text-shadow:0_1px_0_rgba(255,255,255,.5)]">
    <div className="w-[102px] h-[41px] pb-[2px] flex items-center justify-center bg-[#edf1f2] border border-b-0 border-[#85898c] text-[#606365]">Main content</div>
    <div className="w-[77px] h-[40px] pb-[1px] flex items-center justify-center bg-gradient-to-b from-[#b7c6ce] to-[#9eb1be] border-r border-[#8496a1]">Metadata</div>
    <div className="w-[118px] h-[40px] pb-[1px] flex items-center justify-center bg-gradient-to-b from-[#b7c6ce] to-[#9eb1be] border-r border-[#8496a1]">Content snipets</div>
    <div className="w-[30px]" />
  </div>
);
const Field = ({ label, value }: { label: string; value: string }) => (
  <div className="flex h-[25px] text-[#3f4143]">
    <div className="w-[161px] text-[12px] font-bold leading-[23px] [text-shadow:0_1px_0_#fff]">{label}</div>
    <div className="flex-1 rounded-[3px] border border-[#9b9c9e] bg-gradient-to-b from-white to-[#f6f6f6] text-[14px] leading-[24px] pl-[6px]">{value}</div>
  </div>
);

const Disk = () => (
  <svg width="14" height="14" viewBox="0 0 14 14">
    <path d="M.7 .7H13.300V13.300H2L.7 12Z" fill="#4b4f54" stroke="#2f3236" />
    <rect x="3" y="1" width="8" height="6" fill="#f0f0f0" /><rect x="4" y="9" width="6.500" height="4.500" fill="#d4d4d4" /><rect x="5" y="10" width="2" height="3.500" fill="#444" />
  </svg>
);
const Binoc = () => (
  <svg width="15" height="14" viewBox="0 0 15 14" fill="#333639">
    <path d="M3 0H6V3H9V0H12V3L14.500 9V14H9V8H6V14H.5V9L3 3Z" />
    <path d="M2 10H5M10 10H13M2.500 5H5M10 5H12.500" stroke="#999" />
  </svg>
);
const Stop = () => (
  <svg width="15" height="15" viewBox="0 0 15 15">
    <circle cx="7.500" cy="7.500" r="6.800" fill="#cf2a20" stroke="#9c1710" /><rect x="3.300" y="6" width="8.400" height="2.800" fill="#fff" />
  </svg>
);
const Trash = () => (
  <svg width="15" height="16" viewBox="0 0 15 16">
    <rect x="1.500" y=".5" width="10" height="14" fill="#eaf0f8" stroke="#8b97a8" />
    <path d="M4.500 4H8.500L7.500 5.500M8.500 8V10H5" fill="none" stroke="#4b7ac9" strokeWidth="1.200" />
    <path d="M9 8.800H11.300V11H13.800V13.300H11.300V15.600H9V13.300H6.800V11H9Z" fill="#35b53c" stroke="#1a8a28" strokeWidth=".6" />
  </svg>
);
const EditTreeIcon = () => (
  <svg width="16" height="16" viewBox="0 0 16 16">
    <g fill="#f2f8fa" stroke="#8ba0aa"><path d="M5 .5H9L11 2.500V6.500H5Z" /><rect x=".5" y="9" width="6" height="5" /><rect x="9" y="9" width="6" height="5" /></g>
    <path d="M8 6.500V8H3.500V9" fill="none" stroke="#8ba0aa" />
    <Pencil />
  </svg>
);

const Seg = ({ children, className }: Kids) => (
  <div className={`h-full flex items-center border-[#b1b1b1] whitespace-nowrap ${className}`}>{children}</div>
);

const EditWindow = ({ pos, filtered }: { pos: string; filtered?: boolean }) => (
  <Win
    pos={pos}
    tabs={<EditTabs />}
    head="pl-[6px] gap-[1px]"
    title={
      <>
        <L>Pages</L> / <L>Blog</L> / This morning {filtered ? 'blog post' : 'post'}
      </>
    }
  >
    <div className="w-[229px] shrink-0 flex flex-col bg-[#cfdde4] border-r-2 border-[#b3c0c6]">
      <div className="flex pl-[9px] pt-[11px] gap-[8px]">
        <AddNew w="w-[105px]" />
        <div className={`w-[88px] h-[27px] pl-[8px] gap-[4px] ${gray}`}>
          <EditTreeIcon />
          Edit tree
        </div>
      </div>
      {filtered ? (
        <div className="h-[29px] mt-[13px] pl-[11px] text-[14px] leading-[18px] font-bold text-[#3f4143] whitespace-nowrap">
          Filtered tree. <L>Clear filter</L>
        </div>
      ) : (
        <div className="h-[14px]" />
      )}
      <div className="pl-[15px]">
        <Tree rows={filtered ? filteredSide : sideTree} low={filtered} />
      </div>
      <div className="flex-1" />
      <div className="h-[19px] flex items-center justify-end pr-[6px] bg-gradient-to-r from-[#cfdde4] to-[#b3c2ca]">
        <Chev />
      </div>
    </div>
    <div className="flex-1 flex flex-col pl-[17px] pr-[14px]">
      <div className="h-[21px] shrink-0" />
      <Field label="Navigation label" value="Blog" />
      <div className={`mt-[10px] ${rule}`} />
      <div className="h-[13px]" />
      <Field label="Page title" value="CEO’s blog" />
      <div className={`mt-[9px] ${rule}`} />
      <div className="h-[34px] pt-[8px] text-[12px] leading-[20px] font-bold text-[#3f4143] [text-shadow:0_1px_0_#fff]">Content</div>
      <Editor />
      <div className="flex mt-[15px] ml-[-2px] w-[545px] justify-between">
        <div className={`w-[137px] h-[28px] pl-[6px] gap-[4px] ${green}`}>
          <CheckIcon />
          Save &amp; publish
        </div>
        <div className="w-[391px] h-[28px] flex rounded-[4px] border border-[#b1b1b1] bg-gradient-to-b from-[#f9f9f9] to-[#d2d2d2] text-[12px] font-bold text-[#26282a]">
          <Seg className="w-[101px] border-r pl-[11px] gap-[6px]"><Disk />Save draft</Seg>
          <Seg className="w-[82px] border-r pl-[7px] gap-[4px]"><Binoc />Preview</Seg>
          <Seg className="w-[93px] border-r pl-[6px] gap-[5px]"><Stop />Unpublish</Seg>
          <Seg className="pl-[8px] gap-[2px] text-[#c93a3a]"><Trash />Move to trash</Seg>
        </div>
      </div>
    </div>
  </Win>
);

/* ---------- filter panel ---------- */

const frule = 'h-[2px] shrink-0 border-t border-[#a5b3bb] bg-white/70 mx-[9px]';
const box = 'border border-[#97999c] rounded-[3px] bg-gradient-to-b from-[#f3f3f3] via-white to-white';
const Calendar = () => (
  <svg width="15" height="16" viewBox="0 0 15 16">
    <rect x=".5" y="2.500" width="14" height="13" fill="#f4f6f6" stroke="#9aa2a5" />
    <rect x=".5" y="2" width="14" height="4.500" fill="#cf4640" />
    <path d="M3.500 0V4M11.500 0V4" stroke="#7c2723" strokeWidth="1.500" />
    <path d="M3 8.500H12.500M3 10.500H12.500M3 12.500H12.500" stroke="#a9b6b8" strokeDasharray="2 1" />
  </svg>
);
const Chip = ({ children }: Kids) => (
  <span className="h-[17px] pl-[5px] pr-[3px] flex items-center gap-[4px] bg-[#c9d7df] text-[12px] text-[#4c5256]">
    {children}
    <svg width="8" height="8" viewBox="0 0 8 8" stroke="#63696d" strokeWidth="1.200"><path d="M.5 .5L7.500 7.500M7.500 .5L.5 7.500" /></svg>
  </span>
);

const FilterPanel = () => (
  <section className="absolute left-[246px] top-[1607px] w-[171px] h-[661px] flex flex-col bg-[#cedce3] text-[12px] text-[#5d6265]">
    <div className="h-[34px] pl-[10px] pt-[9px] text-[13px] leading-[19px] font-bold tracking-[0.3px] text-[#2b2f31]">Filters</div>
    <div className={frule} />
    <div className="h-[25px] pl-[10px] pt-[5px] leading-[18px] font-bold">Title</div>
    <div className="h-[22px] pl-[10px] leading-[22px]">containing</div>
    <div className={`mx-[9px] w-[154px] h-[27px] shrink-0 ${box}`} />
    <div className={`mt-[11px] ${frule}`} />
    <div className="h-[31px] pl-[10px] leading-[32px] font-bold">Page type</div>
    <div className="ml-[8px] w-[149px] h-[25px] shrink-0 rounded-[4px] border border-[#abadaf] bg-gradient-to-b from-white to-[#e4e4e4] flex items-center justify-between pl-[9px] pr-[8px] text-[11px] font-bold text-[#222]">
      Blog
      <svg width="7" height="12" viewBox="0 0 7 12" fill="#2a86c4"><path d="M3.500 0L7 4.500H0ZM3.500 12L0 7.500H7Z" /></svg>
    </div>
    <div className={`mt-[13px] ${frule}`} />
    <div className="h-[24px] pl-[10px] pt-[5px] leading-[20px] font-bold">Date</div>
    <div className="h-[20px] pl-[10px] leading-[20px]">from</div>
    <div className="flex pl-[9px] gap-[7px] items-center text-[14px] text-[#3f4346]">
      <div className={`w-[133px] h-[25px] pl-[6px] leading-[23px] tracking-[-0.05px] ${box}`}>02/01/2001</div>
      <Calendar />
    </div>
    <div className="h-[27px] pl-[10px] leading-[31px]">to</div>
    <div className="flex pl-[9px] gap-[7px] items-center text-[14px] text-[#3f4346]">
      <div className={`w-[133px] h-[25px] pl-[6px] leading-[23px] tracking-[-0.05px] ${box}`}>22/02/2010</div>
      <Calendar />
    </div>
    <div className={`mt-[15px] ${frule}`} />
    <div className="h-[34px] pl-[10px] leading-[26px]">
      <b>Comments</b> - 4 to 22
    </div>
    <svg className="ml-[9px] shrink-0" width="154" height="20" viewBox="0 0 154 20">
      <rect x=".5" y="6.500" width="153" height="7" rx="3.500" fill="#a9bcc7" stroke="#90a5b1" />
      <rect x="37" y="6.500" width="61" height="7" fill="#2f8fc0" stroke="#1f7197" strokeWidth=".6" />
      <circle cx="37.500" cy="10" r="8.500" fill="#e9e9e9" stroke="#a6a8aa" />
      <circle cx="98.500" cy="10" r="8.500" fill="#e9e9e9" stroke="#a6a8aa" />
    </svg>
    <div className="flex justify-between px-[10px] h-[26px] shrink-0 text-[10px] leading-[14px] text-[#4f5558]">
      <span>0</span>
      <span>30</span>
    </div>
    <div className={frule} />
    <div className="h-[26px] shrink-0 pl-[10px] leading-[27px] font-bold">Tags</div>
    <div className={`ml-[9px] w-[154px] h-[65px] shrink-0 pl-[3px] pt-[4px] flex flex-wrap content-start gap-x-[3px] gap-y-[4px] ${box}`}>
      <Chip>ceo</Chip>
      <Chip>brian</Chip>
      <Chip>team</Chip>
      <Chip>staff</Chip>
      <Chip>management</Chip>
    </div>
    <div className={`mt-[16px] ${frule}`} />
    <div className="h-[31px] pl-[11px] flex items-center gap-[6px] font-bold">
      <Check />
      Highlight mode
    </div>
    <div className={frule} />
    <div className="flex mt-[12px] ml-[10px] gap-[7px]">
      <div className={`w-[92px] h-[27px] justify-center ${green}`}>Apply filter</div>
      <div className="w-[55px] h-[27px] rounded-[3px] border border-[#b1b3b5] bg-gradient-to-b from-white to-[#e0e0e0] text-center leading-[26px] font-bold text-[#26282a]">Reset</div>
    </div>
    <div className="flex-1" />
    <div className="h-[19px] flex items-center justify-end pr-[6px] bg-gradient-to-r from-[#cedce3] to-[#a9b8c0]">
      <Chev />
    </div>
  </section>
);

const Notice = () => (
  <section className="absolute left-[2063px] top-[1614px] w-[507px] h-[78px] bg-[#edf0f2] pl-[12px] pt-[14px]">
    <div className="w-[475px] h-[47px] rounded-[5px] border border-[#8bc53f] bg-[#f4ffe6] flex items-center pl-[8px] gap-[10px] text-[14px] tracking-[-0.1px] font-bold text-[#00914a] whitespace-nowrap">
      <svg width="30" height="30" viewBox="0 0 30 30" fill="none">
        <circle cx="15" cy="15" r="15" fill="#00924a" />
        <path d="M7.500 16L13 21L22.500 10.500" stroke="#fff" strokeWidth="3.400" />
      </svg>
      Awesome!! Your page is saved and published now
    </div>
  </section>
);

/* ---------- flow annotations ---------- */

const lines = [
  'M752.500 479V527.500H2151.500V788',
  'M993.500 724V775.500H1852.500V867',
  'M1819.500 775.500V823',
  'M1878.500 821V779.500H2084.500V804',
  'M802.500 876V722',
  'M693 901.500H336.500V1596',
  'M303.500 2212V2239.500H484',
  'M988.500 1905V1544',
  'M1964.500 899V907.500H1526',
  'M2522.500 1447V1418.500H1526',
  'M2099.500 1474V1592M2099.500 1486.500H2245.500V1474M2099.500 1496.500H2417.500V1474',
  'M2514.500 1599V1540',
  'M1811.500 1814.500L1427 1537',
  'M937 2014.500H1586',
  'M1910.500 1893V1544',
  'M1876.500 1809V1767.500H2083.500V1792',
  'M457 203L570 126',
  'M457 1015L570 938',
];
const heads: [number, number, number][] = [
  [2151.5, 795, 90], [993.5, 716, -90], [2084.5, 811, 90], [802.5, 714, -90], [336.5, 1603, 90], [492, 2239.5, 0],
  [988.5, 1537, -90], [1519, 907.5, 180], [1519, 1418.5, 180], [2099.5, 1599, 90], [2514.5, 1532, -90], [1421, 1533, -144.2],
  [1594, 2014.5, 0], [1910.5, 1537, -90], [2083.5, 1799, 90], [576, 122, -34.2], [576, 934, -34.2],
];
const dots: [number, number][] = [
  [802, 890], [706, 903], [924, 1205], [1820, 836], [1882, 836], [1852.5, 881], [1964.5, 881], [2099.5, 1461], [2245.5, 1461],
  [2417.5, 1461], [2521, 1461], [988, 1918], [924, 2013], [1820, 1824], [1878, 1825], [1910, 1906], [307.5, 2189],
];
const notes: [string, number, number, number, number][] = [
  ['No subnav', 375, 232, 106, 22],
  ['on pages', 375, 262, 92, 22],
  ['No subnav', 375, 1044, 106, 22],
  ['on pages', 375, 1073, 92, 22],
  ['Fields should be pre populated with “new page”', 1623, 502, 477, 22],
  ['Adds the new page inside the selected page', 1203, 754, 441, 22],
  ['Opens parent page', 1881, 770, 192, 22],
  ['Reload page with message', 2132, 1578, 267, 22],
  ['Take the filtered tree to the side', 1094, 2058, 315, 22],
  ['START HERE', 1, 862, 236, 45],
];

const Flow = () => (
  <svg className="absolute left-0 top-0" width="2635" height="2506" viewBox="0 0 2635 2506">
    {dots.map(([x, y]) => (
      <circle key={`${x}-${y}`} cx={x} cy={y} r="13" fill="#ff32f8" fillOpacity=".38" />
    ))}
    <g fill="none" stroke="#ff00ff">
      {lines.map((d) => (
        <path key={d} d={d} />
      ))}
      <path d="M2100 1599.500H2514" strokeDasharray="2 1.500" />
      <path d="M254 848.500H470" strokeWidth="3" />
    </g>
    <g fill="#ff00ff">
      {heads.map(([x, y, a]) => (
        <path key={`${x}-${y}`} d="M0 0L-12 -4.500L-9 0L-12 4.500Z" transform={`translate(${x} ${y}) rotate(${a})`} />
      ))}
      <path d="M491 848.500L458 836.500L466 848.500L458 860.500Z" />
      {notes.map(([t, x, y, w, s]) => (
        <text key={`${t}-${y}`} x={x} y={y} fontSize={s} textLength={w} lengthAdjust="spacingAndGlyphs" fontFamily="'Open Sans', 'Noto Sans', sans-serif">
          {t}
        </text>
      ))}
    </g>
  </svg>
);

export default function App() {
  return (
    <main className="relative w-[2635px] h-[2506px] overflow-hidden bg-white font-['Liberation_Sans',Arial,sans-serif]">
      <AddWindow />
      <TreeWindow pos="left-[507px] top-[816px]" />
      <EditWindow pos="left-[1606px] top-[816px]" />
      <TreeWindow pos="left-[507px] top-[1804px]" filtered />
      <EditWindow pos="left-[1606px] top-[1804px]" filtered />
      <FilterPanel />
      <Notice />
      <Flow />
    </main>
  );
}
